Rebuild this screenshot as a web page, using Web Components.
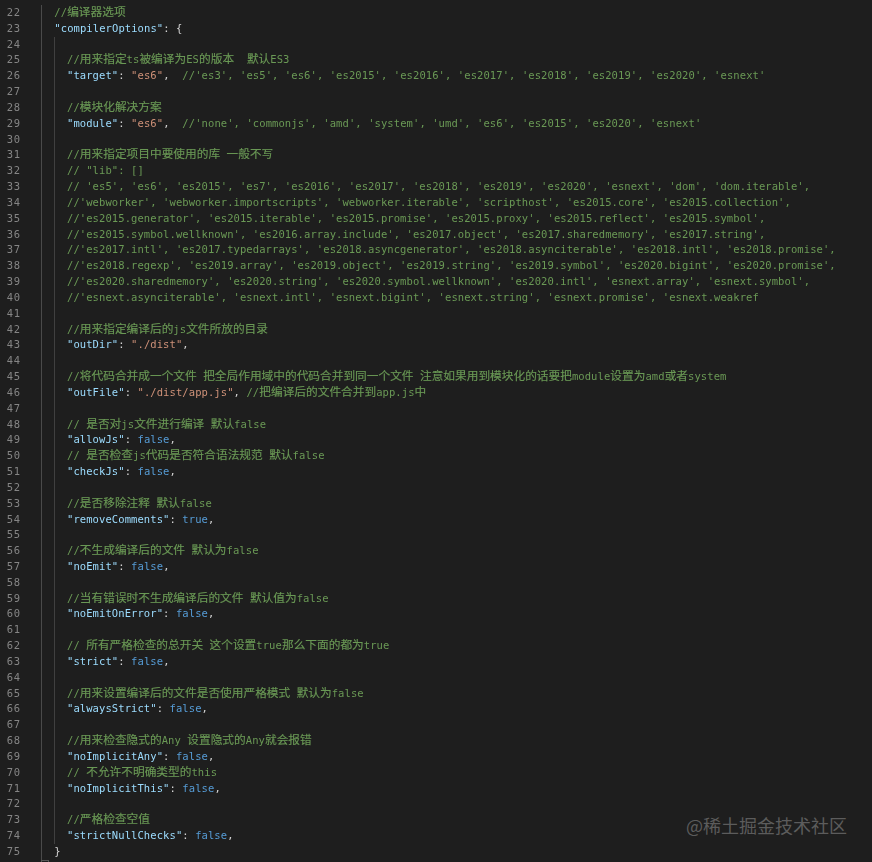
<!DOCTYPE html>
<html>
<head>
<meta charset="utf-8">
<style>
  html, body { margin: 0; padding: 0; background: #1e1e1e; height: 100%; overflow: hidden; }
</style>
</head>
<body>
<code-editor first="22"></code-editor>
<juejin-mark>@稀土掘金技术社区</juejin-mark>
<fold-corner></fold-corner>

<script>
const SOURCE = [
  [1, `//编译器选项`],
  [1, `"compilerOptions": {`],
  [2, ``],
  [2, `//用来指定ts被编译为ES的版本  默认ES3`],
  [2, `"target": "es6",  //'es3', 'es5', 'es6', 'es2015', 'es2016', 'es2017', 'es2018', 'es2019', 'es2020', 'esnext'`],
  [2, ``],
  [2, `//模块化解决方案`],
  [2, `"module": "es6",  //'none', 'commonjs', 'amd', 'system', 'umd', 'es6', 'es2015', 'es2020', 'esnext'`],
  [2, ``],
  [2, `//用来指定项目中要使用的库 一般不写`],
  [2, `// "lib": []`],
  [2, `// 'es5', 'es6', 'es2015', 'es7', 'es2016', 'es2017', 'es2018', 'es2019', 'es2020', 'esnext', 'dom', 'dom.iterable',`],
  [2, `//'webworker', 'webworker.importscripts', 'webworker.iterable', 'scripthost', 'es2015.core', 'es2015.collection',`],
  [2, `//'es2015.generator', 'es2015.iterable', 'es2015.promise', 'es2015.proxy', 'es2015.reflect', 'es2015.symbol',`],
  [2, `//'es2015.symbol.wellknown', 'es2016.array.include', 'es2017.object', 'es2017.sharedmemory', 'es2017.string',`],
  [2, `//'es2017.intl', 'es2017.typedarrays', 'es2018.asyncgenerator', 'es2018.asynciterable', 'es2018.intl', 'es2018.promise',`],
  [2, `//'es2018.regexp', 'es2019.array', 'es2019.object', 'es2019.string', 'es2019.symbol', 'es2020.bigint', 'es2020.promise',`],
  [2, `//'es2020.sharedmemory', 'es2020.string', 'es2020.symbol.wellknown', 'es2020.intl', 'esnext.array', 'esnext.symbol',`],
  [2, `//'esnext.asynciterable', 'esnext.intl', 'esnext.bigint', 'esnext.string', 'esnext.promise', 'esnext.weakref`],
  [2, ``],
  [2, `//用来指定编译后的js文件所放的目录`],
  [2, `"outDir": "./dist",`],
  [2, ``],
  [2, `//将代码合并成一个文件 把全局作用域中的代码合并到同一个文件 注意如果用到模块化的话要把module设置为amd或者system`],
  [2, `"outFile": "./dist/app.js", //把编译后的文件合并到app.js中`],
  [2, ``],
  [2, `// 是否对js文件进行编译 默认false`],
  [2, `"allowJs": false,`],
  [2, `// 是否检查js代码是否符合语法规范 默认false`],
  [2, `"checkJs": false,`],
  [2, ``],
  [2, `//是否移除注释 默认false`],
  [2, `"removeComments": true,`],
  [2, ``],
  [2, `//不生成编译后的文件 默认为false`],
  [2, `"noEmit": false,`],
  [2, ``],
  [2, `//当有错误时不生成编译后的文件 默认值为false`],
  [2, `"noEmitOnError": false,`],
  [2, ``],
  [2, `// 所有严格检查的总开关 这个设置true那么下面的都为true`],
  [2, `"strict": false,`],
  [2, ``],
  [2, `//用来设置编译后的文件是否使用严格模式 默认为false`],
  [2, `"alwaysStrict": false,`],
  [2, ``],
  [2, `//用来检查隐式的Any 设置隐式的Any就会报错`],
  [2, `"noImplicitAny": false,`],
  [2, `// 不允许不明确类型的this`],
  [2, `"noImplicitThis": false,`],
  [2, ``],
  [2, `//严格检查空值`],
  [2, `"strictNullChecks": false,`],
  [1, `}`]
];

function esc(s) {
  return s.replace(/&/g, '&amp;').replace(/</g, '&lt;');
}

function cjk(s) {
  return esc(s).replace(/[\u3000-\u9fff]+/g, m => `<span class="cjk">${m}</span>`);
}

function highlight(text) {
  let out = '';
  let rest = text;
  while (rest.length) {
    let m;
    if (rest.startsWith('//')) {
      out += `<span class="comment">${cjk(rest)}</span>`;
      break;
    } else if ((m = rest.match(/^"[^"]*"(?=:)/))) {
      out += `<span class="key">${esc(m[0])}</span>`;
    } else if ((m = rest.match(/^"[^"]*"/))) {
      out += `<span class="str">${esc(m[0])}</span>`;
    } else if ((m = rest.match(/^(true|false)/))) {
      out += `<span class="bool">${m[0]}</span>`;
    } else {
      m = [rest[0]];
      out += esc(rest[0]);
    }
    rest = rest.slice(m[0].length);
  }
  return out;
}

class CodeLine extends HTMLElement {
  constructor() {
    super();
    this.attachShadow({ mode: 'open' });
    this.shadowRoot.innerHTML = `
      <style>
        :host {
          display: flex;
          height: var(--line-height);
          line-height: var(--line-height);
          white-space: pre;
        }
        .num {
          flex: none;
          width: 20.5px;
          text-align: right;
          color: #858585;
          font-size: 10.5px;
          letter-spacing: 0.5px;
        }
        .gap { flex: none; width: 20.5px; border-right: 1px solid #4a4a4a; }
        .body { flex: 1; display: flex; min-width: 0; }
        .indent { flex: none; width: 12.68px; box-sizing: border-box; }
        .indent.first { width: 12.32px; }
        .indent.guide { border-left: 1px solid #404040; }
        .text { color: #d4d4d4; }
      </style>
      <span class="num"></span>
      <span class="gap"></span>
      <div class="body"></div>
    `;
  }

  set line({ num, level, text, guide }) {
    const root = this.shadowRoot;
    root.querySelector('.num').textContent = num;
    let indents = '<span class="indent first"></span>';
    if (level > 1) indents += `<span class="indent${guide ? ' guide' : ''}"></span>`;
    root.querySelector('.body').innerHTML = `
      <style>
        .cjk {
          font-family: "Noto Sans CJK SC", sans-serif;
          font-size: 11.7px;
          line-height: 0;
          letter-spacing: 0;
          -webkit-text-stroke: 0.15px currentColor;
        }
        .comment { color: #6a9955; }
        .key { color: #9cdcfe; }
        .str { color: #ce9178; }
        .bool { color: #569cd6; }
      </style>
      ${indents}<span class="text">${highlight(text)}</span>`;
  }
}

class CodeEditor extends HTMLElement {
  constructor() {
    super();
    this.attachShadow({ mode: 'open' });
    this.shadowRoot.innerHTML = `
      <style>
        :host {
          display: block;
          --line-height: 15.83px;
          padding-top: 5px;
          font-family: "DejaVu Sans Mono", monospace;
          font-size: 10.5px;
          letter-spacing: 0.085px;
          color: #d4d4d4;
          filter: blur(0.25px);
        }
      </style>
      <div id="lines"></div>
    `;
  }

  connectedCallback() {
    const first = Number(this.getAttribute('first'));
    const box = this.shadowRoot.getElementById('lines');
    SOURCE.forEach(([level, text], i) => {
      const el = document.createElement('code-line');
      box.appendChild(el);
      el.line = { num: first + i, level, text, guide: level > 1 };
    });
  }
}

class JuejinMark extends HTMLElement {
  constructor() {
    super();
    this.attachShadow({ mode: 'open' });
    this.shadowRoot.innerHTML = `
      <style>
        :host {
          position: absolute;
          right: 25px;
          top: 813px;
          font-family: "Noto Sans CJK SC", sans-serif;
          font-size: 18px;
          line-height: 24px;
          color: #5c5c5c;
          white-space: nowrap;
        }
      </style>
      <slot></slot>
    `;
  }
}

// the little piece of the panel edge that shows at the very bottom of the gutter
class FoldCorner extends HTMLElement {
  constructor() {
    super();
    this.attachShadow({ mode: 'open' });
    this.shadowRoot.innerHTML = `
      <style>
        :host {
          position: absolute;
          left: 41px;
          top: 860px;
          width: 6px;
          height: 2px;
          border: 1px solid #555;
          border-bottom: none;
        }
      </style>
    `;
  }
}

customElements.define('code-line', CodeLine);
customElements.define('code-editor', CodeEditor);
customElements.define('juejin-mark', JuejinMark);
customElements.define('fold-corner', FoldCorner);
</script>
</body>
</html>
